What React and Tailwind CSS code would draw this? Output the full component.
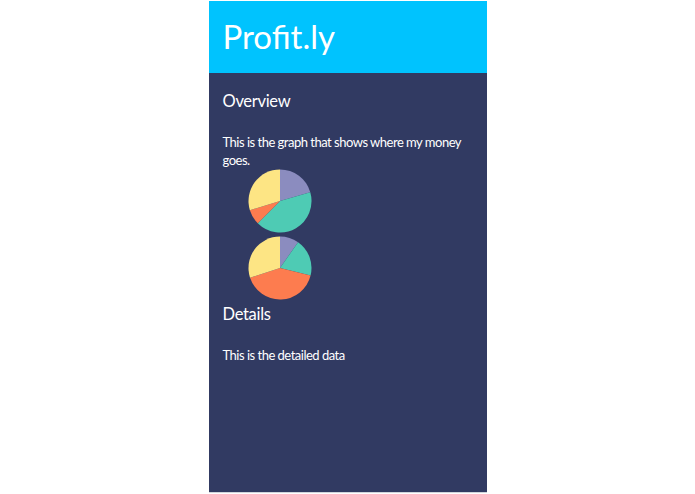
import React from "react";

const COLORS = {
  purple: "#8b8cbf",
  teal: "#4ecbb4",
  orange: "#fd7c4f",
  yellow: "#fde584",
};

// angles in degrees, clockwise from 12 o'clock
const arc = (cx, cy, r, a0, a1) => {
  const p = (a) => {
    const rad = ((a - 90) * Math.PI) / 180;
    return [cx + r * Math.cos(rad), cy + r * Math.sin(rad)];
  };
  const [x0, y0] = p(a0);
  const [x1, y1] = p(a1);
  const large = a1 - a0 > 180 ? 1 : 0;
  return `M${cx},${cy} L${x0},${y0} A${r},${r} 0 ${large} 1 ${x1},${y1} Z`;
};

const Pie = ({ slices }) => (
  <svg width="64" height="64" viewBox="0 0 64 64" className="block">
    {slices.map(([a0, a1, c], i) => (
      <path key={i} d={arc(32, 32, 31.5, a0, a1)} fill={COLORS[c]} />
    ))}
  </svg>
);

const App = () => {
  return (
    <div className="min-h-screen bg-white flex justify-center pt-px" style={{ fontFamily: "Lato, 'Liberation Sans', sans-serif" }}>
      <div className="w-[278px] h-[492px] bg-[#313a62] border-b border-gray-300">
        {/* header */}
        <div className="h-[72px] bg-[#00c3fe] flex items-center px-[14px]">
          <h1 className="text-white text-[33px] font-normal">Profit.ly</h1>
        </div>

        {/* overview */}
        <div className="px-[14px] text-white">
          <h2 className="text-[16.5px] mt-[18px] leading-5 tracking-[-0.3px]">Overview</h2>
          <p className="text-[13px] leading-[18px] mt-[22px] tracking-[-0.5px]">
            This is the graph that shows where my money goes.
          </p>
          <div className="ml-[25px] flex flex-col gap-[3px]">
            <Pie
              slices={[
                [0, 74, "purple"],
                [74, 225, "teal"],
                [225, 253, "orange"],
                [253, 360, "yellow"],
              ]}
            />
            <Pie
              slices={[
                [0, 35, "purple"],
                [35, 104, "teal"],
                [104, 252, "orange"],
                [252, 360, "yellow"],
              ]}
            />
          </div>

          {/* details */}
          <h2 className="text-[16.5px] leading-5 mt-[4px] tracking-[-0.3px]">Details</h2>
          <p className="text-[13px] leading-[18px] mt-[22px] tracking-[-0.5px]">This is the detailed data</p>
        </div>
      </div>
    </div>
  );
};

export default App;
